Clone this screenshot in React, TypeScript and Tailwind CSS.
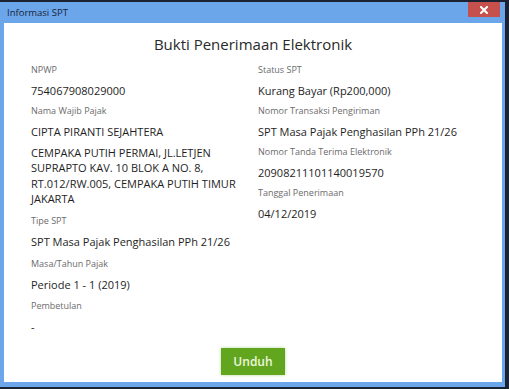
import React from "react";

interface Field {
  label: string;
  value: React.ReactNode;
}

const kiri: Field[] = [
  { label: "NPWP", value: "754067908029000" },
  { label: "Nama Wajib Pajak", value: "CIPTA PIRANTI SEJAHTERA" },
  { label: "Tipe SPT", value: "SPT Masa Pajak Penghasilan PPh 21/26" },
  { label: "Masa/Tahun Pajak", value: "Periode 1 - 1 (2019)" },
  { label: "Pembetulan", value: "-" },
];

const kanan: Field[] = [
  { label: "Status SPT", value: "Kurang Bayar (Rp200,000)" },
  { label: "Nomor Transaksi Pengiriman", value: "SPT Masa Pajak Penghasilan PPh 21/26" },
  { label: "Nomor Tanda Terima Elektronik", value: "20908211101140019570" },
  { label: "Tanggal Penerimaan", value: "04/12/2019" },
];

function Item({ label, value, longgar }: Field & { longgar?: boolean }) {
  return (
    <div className={longgar ? "mb-[7.5px]" : "mb-[6px]"}>
      <div className="text-[9px] leading-[14px] text-[#6b6b6b]">{label}</div>
      <div className="mt-[6px] text-[11px] leading-[15px] text-[#1e1e1e]">{value}</div>
    </div>
  );
}

export default function App() {
  return (
    <div
      className="w-[509px] h-[389px] bg-[#1a2233] pt-[2px] pr-[4px] pb-[2px] overflow-hidden"
      style={{ fontFamily: '"Open Sans", "Noto Sans", sans-serif' }}
    >
      <div className="flex h-full flex-col bg-[#6ca6ea] pl-[4px] pr-[3px] pb-[5px]">
        {/* title bar */}
        <div className="flex h-[21px] items-start justify-between">
          <span className="pl-[3px] pt-[5px] text-[9.5px] leading-[12px] text-[#172338]">Informasi SPT</span>
          <button
            type="button"
            className="mr-[2px] flex h-[15px] w-[32px] items-center justify-center bg-[#c6504c]"
          >
            <svg width="8" height="8" viewBox="0 0 8 8">
              <path d="M1 1 L7 7 M7 1 L1 7" stroke="#ffffff" strokeWidth="2" strokeLinecap="square" />
            </svg>
          </button>
        </div>

        {/* isi */}
        <div className="flex flex-1 flex-col bg-white">
          <h1 className="mt-[10px] text-center text-[15px] leading-[22px] text-[#2a2a2a]">
            Bukti Penerimaan Elektronik
          </h1>

          <div className="mt-[8px] grid grid-cols-[227px_1fr] px-[27px]">
            <div>
              <Item {...kiri[0]} />
              <div className="mb-[8px]">
                <div className="text-[9px] leading-[14px] text-[#6b6b6b]">{kiri[1].label}</div>
                <div className="mt-[6px] text-[11px] leading-[15px] text-[#1e1e1e]">{kiri[1].value}</div>
                <div className="mt-[6px] text-[11px] leading-[15.3px] text-[#1e1e1e]">
                  CEMPAKA PUTIH PERMAI, JL.LETJEN
                  <br />
                  SUPRAPTO KAV. 10 BLOK A NO. 8,
                  <br />
                  RT.012/RW.005, CEMPAKA PUTIH TIMUR
                  <br />
                  JAKARTA
                </div>
              </div>
              {kiri.slice(2).map((f) => (
                <Item key={f.label} {...f} longgar />
              ))}
            </div>
            <div>
              {kanan.map((f) => (
                <Item key={f.label} {...f} />
              ))}
            </div>
          </div>

          <div className="mt-auto mb-[7px] flex justify-center">
            <button
              type="button"
              className="h-[27px] w-[64px] bg-[#62a620] text-[12px] font-semibold text-[#eef8dc] shadow-[0_0_3px_rgba(98,166,32,0.45)]"
            >
              Unduh
            </button>
          </div>
        </div>
      </div>
    </div>
  );
}
